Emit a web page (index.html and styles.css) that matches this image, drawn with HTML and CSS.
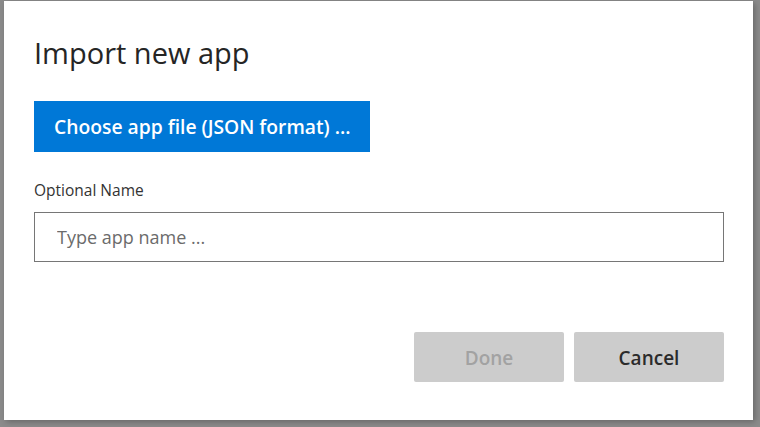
FILE: index.html
```html
<!DOCTYPE html>
<html lang="en">
<head>
<meta charset="utf-8">
<title>Import new app</title>
<link rel="stylesheet" href="styles.css">
</head>
<body>
<div class="dialog">
  <h1 class="title">Import new app</h1>
  <button class="btn-primary" type="button">Choose app file (JSON format) ...</button>
  <label class="field-label" for="appname">Optional Name</label>
  <input class="field-input" id="appname" type="text" placeholder="Type app name ...">
  <div class="actions">
    <button class="btn btn-disabled" type="button">Done</button>
    <button class="btn" type="button">Cancel</button>
  </div>
</div>
</body>
</html>
```
FILE: styles.css
```css
html, body {
  margin: 0;
  padding: 0;
  height: 100%;
}
body {
  background: #8b8b8b;
  font-family: "Open Sans", "Noto Sans", sans-serif;
  padding: 1px 0 0 4px;
  box-sizing: border-box;
}
.dialog {
  width: 749px;
  height: 419px;
  background: #fff;
  box-sizing: border-box;
  padding: 30px 30px 0 30px;
  display: flex;
  flex-direction: column;
  align-items: flex-start;
  box-shadow: 2px 2px 6px rgba(0,0,0,0.25);
}
.title {
  margin: 0;
  font-size: 29px;
  font-weight: 400;
  color: #252525;
  line-height: 44px;
}
.btn-primary {
  margin-top: 26px;
  width: 336px;
  height: 51px;
  border: none;
  background: #0078d7;
  color: #fff;
  font-family: inherit;
  font-size: 19.3px;
  font-weight: 600;
  text-align: left;
  padding: 0 0 0 20px;
}
.field-label {
  margin-top: 27px;
  font-size: 15.5px;
  color: #333;
  line-height: 22px;
}
.field-input {
  margin-top: 11px;
  width: 690px;
  height: 50px;
  box-sizing: border-box;
  border: 1px solid #767676;
  padding: 0 0 0 22px;
  font-family: inherit;
  font-size: 18px;
  color: #333;
  outline: none;
}
.field-input::placeholder {
  color: #6b6b6b;
}
.actions {
  align-self: stretch;
  display: flex;
  justify-content: flex-end;
  gap: 10px;
  margin-top: 70px;
  margin-right: -1px;
}
.btn {
  width: 150px;
  height: 50px;
  border: none;
  border-radius: 2px;
  background: #cccccc;
  color: #2b2b2b;
  font-family: inherit;
  font-size: 19px;
  font-weight: 600;
  padding: 2px 0 0 0;
}
.btn-disabled {
  color: #a2a2a2;
}
```
